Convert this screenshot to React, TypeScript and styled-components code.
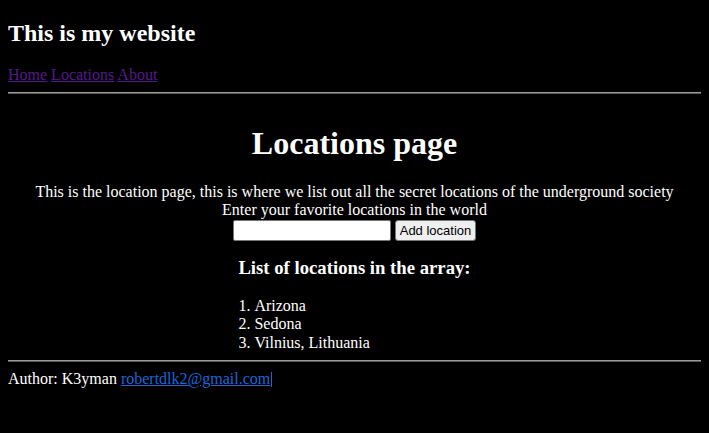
import styled, { createGlobalStyle } from 'styled-components'

const GlobalStyle = createGlobalStyle`
  body {
    margin: 8px;
    background: #000;
    color: #fff;
    font-family: "Liberation Serif", "Times New Roman", serif;
    font-size: 16px;
  }
`

const SiteTitle = styled.h2`
  font-size: 24px;
  font-weight: bold;
  margin: 12px 0 19px;
`

const Nav = styled.nav`
  line-height: 18px;
`

const NavLink = styled.a`
  color: #551a8b;
  text-decoration: underline;
`

const Rule = styled.hr`
  margin: 8px 0;
  border: none;
  border-top: 1px solid #9a9a9a;
  border-bottom: 1px solid #5a5a5a;
  height: 0;
`

const Main = styled.main`
  display: flow-root;
  text-align: center;
`

const PageTitle = styled.h1`
  font-size: 32px;
  margin: 23px 0 21px;
`

const Intro = styled.div`
  line-height: 18px;
`

const InputRow = styled.div`
  display: flex;
  justify-content: center;
  align-items: center;
  gap: 4px;
  margin-top: 1px;
`

const TextInput = styled.input`
  box-sizing: border-box;
  width: 158px;
  height: 21px;
  border: 1px solid #767676;
  border-radius: 2px;
  background: #fff;
  padding: 1px 2px;
`

const AddButton = styled.button`
  box-sizing: border-box;
  height: 21px;
  padding: 0 4px;
  font-family: "Liberation Sans", Arial, sans-serif;
  font-size: 13px;
  color: #000;
  background: #efefef;
  border: 1px solid #767676;
  border-radius: 3px;
`

const ListBlock = styled.div`
  width: fit-content;
  margin: 0 auto;
  text-align: left;
`

const ListTitle = styled.h3`
  font-size: 18.72px;
  margin: 16px 0 18px;
`

const LocationList = styled.ol`
  list-style-position: inside;
  margin: 0;
  padding: 0;
  line-height: 18.4px;
`

const Footer = styled.footer`
  line-height: 18px;
`

const MailLink = styled.a`
  color: #1a66d6;
  text-decoration: underline;

  &::after {
    content: '';
    display: inline-block;
    width: 1px;
    height: 15px;
    margin-left: 1px;
    vertical-align: -3px;
    background: #1a66d6;
  }
`

const locations = ['Arizona', 'Sedona', 'Vilnius, Lithuania']

export default function App() {
  return (
    <>
      <GlobalStyle />
      <header>
        <SiteTitle>This is my website</SiteTitle>
        <Nav>
          <NavLink href="#">Home</NavLink> <NavLink href="#">Locations</NavLink>{' '}
          <NavLink href="#">About</NavLink>
        </Nav>
        <Rule />
      </header>
      <Main>
        <PageTitle>Locations page</PageTitle>
        <Intro>
          This is the location page, this is where we list out all the secret locations of the underground society
          <br />
          Enter your favorite locations in the world
        </Intro>
        <InputRow>
          <TextInput type="text" />
          <AddButton>Add location</AddButton>
        </InputRow>
        <ListBlock>
          <ListTitle>List of locations in the array:</ListTitle>
          <LocationList>
            {locations.map((loc) => (
              <li key={loc}>{loc}</li>
            ))}
          </LocationList>
        </ListBlock>
      </Main>
      <Rule />
      <Footer>
        Author: K3yman <MailLink href="#">robertdlk2@gmail.com</MailLink>
      </Footer>
    </>
  )
}
